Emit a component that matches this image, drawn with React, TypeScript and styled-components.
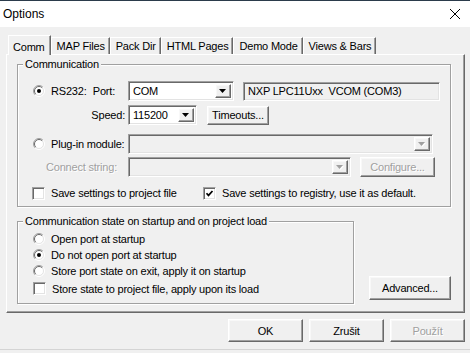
import React from 'react';
import styled, { createGlobalStyle, css } from 'styled-components';

const GlobalStyle = createGlobalStyle`
	html, body {
		margin: 0;
		padding: 0;
		background: #f0f0f0;
	}
	body {
		font-family: "Liberation Sans", Arial, sans-serif;
		font-size: 11px;
		letter-spacing: -0.2px;
		color: #000;
	}
	* {
		box-sizing: border-box;
	}
`;

const raised = css`
	border: 1px solid;
	border-color: #fff #696969 #696969 #fff;
	box-shadow: inset -1px -1px #a0a0a0, inset 1px 1px #f8f8f8;
`;

const sunken = css`
	border: 1px solid;
	border-color: #a0a0a0 #fff #fff #a0a0a0;
	box-shadow: inset 1px 1px #696969, inset -1px -1px #e3e3e3;
`;

const Window = styled.div`
	width: 470px;
	height: 353px;
	overflow: hidden;
	background: #f0f0f0;
	border-top: 1px solid #2b3b4b;
	display: flex;
	flex-direction: column;
`;

const TitleBar = styled.div`
	height: 26px;
	flex: none;
	background: #fff;
	display: flex;
	align-items: center;
	justify-content: space-between;
	padding: 0 10px 0 3px;
	font-size: 12px;
	letter-spacing: 0;
`;

const Body = styled.div`
	display: flex;
	flex-direction: column;
	padding: 8px 0 0 6px;
`;

const TabStrip = styled.div`
	display: flex;
	align-items: flex-end;
	height: 19px;
	padding-left: 2px;
	position: relative;
	z-index: 1;
`;

const Tab = styled.div<{ $active?: boolean }>`
	height: ${(p) => (p.$active ? '20px' : '17px')};
	margin-bottom: ${(p) => (p.$active ? '-1px' : '0')};
	padding: ${(p) => (p.$active ? '2px 5px 0 4px' : '0 4px 0 5px')};
	display: flex;
	align-items: center;
	background: #f0f0f0;
	border-left: 1px solid #fff;
	border-top: 1px solid #fff;
	border-right: 1px solid #696969;
	box-shadow: inset -1px 0 #a0a0a0;
	white-space: nowrap;
`;

const Panel = styled.div`
	width: 459px;
	height: 259px;
	flex: none;
	border: 1px solid;
	border-color: #fff #696969 #696969 #fff;
	box-shadow: inset -1px -1px #a0a0a0;
	padding: 3px 13px 0 10px;
	display: flex;
	flex-direction: column;
`;

const Group = styled.fieldset<{ $width?: number; $pad?: string }>`
	margin: 0;
	min-width: 0;
	width: ${(p) => (p.$width ? `${p.$width}px` : 'auto')};
	padding: ${(p) => p.$pad ?? '0'};
	border: 1px solid #a0a0a0;
	box-shadow: inset 1px 1px #fff, 1px 1px #fff;
`;

const Legend = styled.legend`
	margin-left: 5px;
	padding: 0 2px 0 2px;
	line-height: 13px;
	background: #f0f0f0;
`;

const Row = styled.div<{ $h: number; $mt?: number }>`
	display: flex;
	align-items: center;
	height: ${(p) => p.$h}px;
	margin-top: ${(p) => p.$mt ?? 0}px;
`;

const LabelCol = styled.div<{ $w?: number; $pl?: number; $right?: boolean }>`
	width: ${(p) => p.$w ?? 110}px;
	flex: none;
	display: flex;
	align-items: center;
	justify-content: ${(p) => (p.$right ? 'flex-end' : 'flex-start')};
	padding-left: ${(p) => p.$pl ?? 0}px;
	padding-right: ${(p) => (p.$right ? 3 : 0)}px;
	white-space: nowrap;
`;

const Muted = styled.span`
	color: #a0a0a0;
	text-shadow: 1px 1px #fff;
`;

const PortLabel = styled.span`
	margin-left: auto;
	margin-right: 13px;
`;

const Option = styled.label`
	display: flex;
	align-items: center;
	gap: 6px;
	white-space: nowrap;
`;

const Field = styled.div<{ $w: number; $h?: number; $disabled?: boolean }>`
	${sunken};
	width: ${(p) => p.$w}px;
	height: ${(p) => p.$h ?? 20}px;
	flex: none;
	display: flex;
	align-items: center;
	padding: 2px;
	background: ${(p) => (p.$disabled ? '#f0f0f0' : '#fff')};
`;

const FieldText = styled.span`
	flex: 1;
	padding-left: 2px;
	white-space: pre;
	overflow: hidden;
`;

const DropButton = styled.div`
	${raised};
	width: 16px;
	height: 100%;
	flex: none;
	display: flex;
	align-items: center;
	justify-content: center;
	background: #f0f0f0;
`;

const Button = styled.button<{ $w: number; $h?: number; $ml?: number }>`
	${raised};
	width: ${(p) => p.$w}px;
	height: ${(p) => p.$h ?? 23}px;
	margin-left: ${(p) => p.$ml ?? 0}px;
	flex: none;
	padding: 0;
	background: #f0f0f0;
	font: inherit;
	letter-spacing: inherit;
	color: #000;

	&:disabled {
		color: #a0a0a0;
		text-shadow: 1px 1px #fff;
	}
`;

const Bottom = styled.div`
	display: flex;
	justify-content: space-between;
	align-items: flex-end;
	margin-top: 8px;
`;

const OptionList = styled.div`
	display: flex;
	flex-direction: column;
`;

const OptionRow = styled.div<{ $h: number }>`
	height: ${(p) => p.$h}px;
	display: flex;
	align-items: center;
	padding-left: 15px;
`;

const Footer = styled.div`
	display: flex;
	justify-content: flex-end;
	gap: 6px;
	padding: 6px 5px 0 0;
`;

const BottomEdge = styled.div`
	margin-top: 7px;
	border-top: 1px solid #d4d4d4;
	flex: 1;
`;

const Arrow: React.FC<{ disabled?: boolean }> = ({ disabled }) => (
	<svg width="8" height="5" viewBox="0 0 8 5">
		{disabled && <path d="M1 1h7l-3.5 4z" fill="#fff" />}
		<path d="M0 0h7l-3.5 4z" fill={disabled ? '#a0a0a0' : '#000'} />
	</svg>
);

const Combo: React.FC<{ w: number; value?: string; disabled?: boolean }> = ({ w, value, disabled }) => (
	<Field $w={w} $disabled={disabled}>
		<FieldText>{value}</FieldText>
		<DropButton>
			<Arrow disabled={disabled} />
		</DropButton>
	</Field>
);

const Radio: React.FC<{ checked?: boolean }> = ({ checked }) => (
	<svg width="12" height="12" viewBox="0 0 12 12">
		<circle cx="6" cy="6" r="5" fill="#fff" />
		<path d="M2.1 9.9A5.5 5.5 0 0 1 9.9 2.1" fill="none" stroke="#a0a0a0" />
		<path d="M9.9 2.1A5.5 5.5 0 0 1 2.1 9.9" fill="none" stroke="#fff" />
		<path d="M2.8 9.2A4.5 4.5 0 0 1 9.2 2.8" fill="none" stroke="#696969" />
		<path d="M9.2 2.8A4.5 4.5 0 0 1 2.8 9.2" fill="none" stroke="#e3e3e3" />
		{checked && <circle cx="6" cy="6" r="2" fill="#000" />}
	</svg>
);

const CheckBox = styled.span`
	${sunken};
	width: 13px;
	height: 13px;
	flex: none;
	background: #fff;
	display: flex;
	align-items: center;
	justify-content: center;
`;

const Check: React.FC<{ checked?: boolean }> = ({ checked }) => (
	<CheckBox>
		{checked && (
			<svg width="9" height="9" viewBox="0 0 9 9">
				<path d="M1.5 4.2l2 2.2 4-4.4" fill="none" stroke="#000" strokeWidth="1.7" />
			</svg>
		)}
	</CheckBox>
);

const tabs = ['Comm', 'MAP Files', 'Pack Dir', 'HTML Pages', 'Demo Mode', 'Views & Bars'];

export default function App() {
	return (
		<>
			<GlobalStyle />
			<Window>
				<TitleBar>
					<span>Options</span>
					<svg width="10" height="10" viewBox="0 0 10 10">
						<path d="M0 0L10 10M10 0L0 10" stroke="#000" strokeWidth="1" />
					</svg>
				</TitleBar>
				<Body>
					<TabStrip>
						{tabs.map((t, i) => (
							<Tab key={t} $active={i === 0}>
								{t}
							</Tab>
						))}
					</TabStrip>
					<Panel>
						<Group $pad="10px 0 6px 0">
							<Legend>Communication</Legend>
							<Row $h={20}>
								<LabelCol $pl={15}>
									<Option>
										<Radio checked />
										RS232:
									</Option>
									<PortLabel>Port:</PortLabel>
								</LabelCol>
								<Combo w={106} value="COM" />
								<Field $w={197} $h={19} $disabled style={{ marginLeft: 9 }}>
									<FieldText>NXP LPC11Uxx  VCOM (COM3)</FieldText>
								</Field>
							</Row>
							<Row $h={20} $mt={4}>
								<LabelCol $right>Speed:</LabelCol>
								<Combo w={69} value="115200" />
								<Button $w={62} $h={19} $ml={10}>
									Timeouts...
								</Button>
							</Row>
							<Row $h={20} $mt={9}>
								<LabelCol $pl={15}>
									<Option>
										<Radio />
										Plug-in module:
									</Option>
								</LabelCol>
								<Combo w={305} disabled />
							</Row>
							<Row $h={20} $mt={3}>
								<LabelCol $pl={28}>
									<Muted>Connect string:</Muted>
								</LabelCol>
								<Combo w={223} disabled />
								<Button $w={75} $h={20} $ml={9} disabled>
									Configure...
								</Button>
							</Row>
							<Row $h={14} $mt={9}>
								<LabelCol $w={185} $pl={14}>
									<Option>
										<Check />
										Save settings to project file
									</Option>
								</LabelCol>
								<Option>
									<Check checked />
									Save settings to registry, use it as default.
								</Option>
							</Row>
						</Group>
						<Bottom>
							<Group $width={337} $pad="3px 0 5px 0">
								<Legend>Communication state on startup and on project load</Legend>
								<OptionList>
									<OptionRow $h={16}>
										<Option>
											<Radio />
											Open port at startup
										</Option>
									</OptionRow>
									<OptionRow $h={16}>
										<Option>
											<Radio checked />
											Do not open port at startup
										</Option>
									</OptionRow>
									<OptionRow $h={16}>
										<Option>
											<Radio />
											Store port state on exit, apply it on startup
										</Option>
									</OptionRow>
									<OptionRow $h={19}>
										<Option>
											<Check />
											Store state to project file, apply upon its load
										</Option>
									</OptionRow>
								</OptionList>
							</Group>
							<Button $w={82} $h={24} style={{ marginBottom: 4 }}>
								Advanced...
							</Button>
						</Bottom>
					</Panel>
				</Body>
				<Footer>
					<Button $w={75}>OK</Button>
					<Button $w={75}>Zrušit</Button>
					<Button $w={75} disabled>
						Použít
					</Button>
				</Footer>
				<BottomEdge />
			</Window>
		</>
	);
}
